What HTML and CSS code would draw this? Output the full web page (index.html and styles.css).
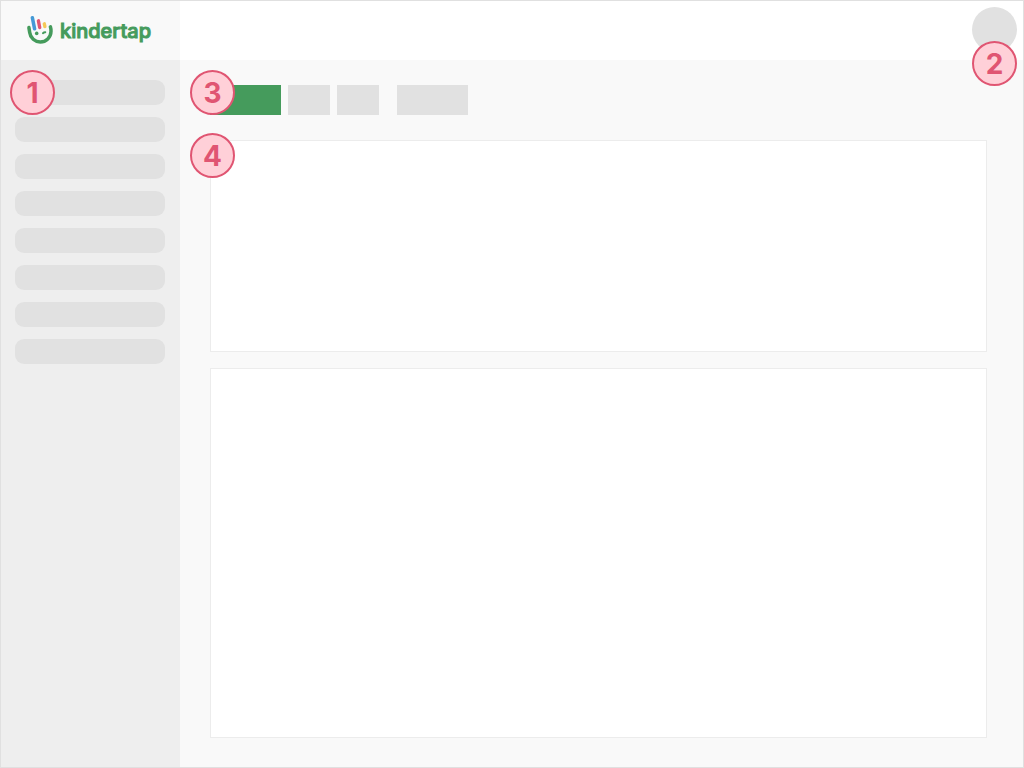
FILE: index.html
```html
<!DOCTYPE html>
<html lang="en">
<head>
    <meta charset="UTF-8">
    <meta name="viewport" content="width=device-width, initial-scale=1.0">
    <title>Kindertap</title>
    <link rel="stylesheet" href="styles.css">
</head>
<body>
    <div class="app">
        <a class="logo" href="#">
            <svg class="logo-icon" viewBox="0 0 28 29" fill="none" stroke-linecap="round">
                <path d="M2.900 11.600L3.700 16.500A10.800 10.800 0 0 0 14.300 26A10.800 10.800 0 0 0 25 15.500Q25.100 13 24.400 10.800" stroke="#459b5c" stroke-width="3.500"/>
                <path d="M6.400 1.800L8.600 12.800" stroke="#4599d6" stroke-width="3.500"/>
                <path d="M12.400 4.800L13.700 11.500" stroke="#e05572" stroke-width="3.400"/>
                <path d="M18.300 7.800L18.900 10.600" stroke="#f5c857" stroke-width="3.400"/>
                <circle cx="10.700" cy="17.400" r="1.800" fill="#459b5c"/>
                <path d="M16.900 17.200Q18 16.200 19.300 16.300" stroke="#459b5c" stroke-width="1.900"/>
            </svg>
            <span class="logo-text">kindertap</span>
        </a>

        <header class="topbar">
            <div class="account">
                <button class="avatar" type="button" aria-label="Account"></button>
                <span class="badge">2</span>
            </div>
        </header>

        <nav class="sidebar">
            <span class="badge">1</span>
            <a href="#" aria-label="Menu item 1"></a>
            <a href="#" aria-label="Menu item 2"></a>
            <a href="#" aria-label="Menu item 3"></a>
            <a href="#" aria-label="Menu item 4"></a>
            <a href="#" aria-label="Menu item 5"></a>
            <a href="#" aria-label="Menu item 6"></a>
            <a href="#" aria-label="Menu item 7"></a>
            <a href="#" aria-label="Menu item 8"></a>
        </nav>

        <main class="content">
            <div class="toolbar">
                <span class="badge">3</span>
                <div class="button-group">
                    <button class="wide primary" type="button" aria-label="Primary action"></button>
                    <button type="button" aria-label="Previous"></button>
                    <button type="button" aria-label="Next"></button>
                </div>
                <button class="wide" type="button" aria-label="More"></button>
            </div>
            <section class="card">
                <span class="badge">4</span>
            </section>
            <section class="card card-main"></section>
        </main>
    </div>
</body>
</html>
```

FILE: styles.css
```css
* {
    box-sizing: border-box;
}
body {
    margin: 0;
    font-family: Inter, "Liberation Sans", Arial, sans-serif;
    background-color: #f9f9f9;
}
button {
    border: none;
    padding: 0;
    background-color: #e1e1e1;
    cursor: pointer;
}
.app {
    display: grid;
    grid-template-columns: 179px 1fr;
    grid-template-rows: 59px 1fr;
    min-height: 100vh;
    border: 1px solid #e0e0e0;
}
.logo {
    display: flex;
    align-items: center;
    gap: 6px;
    padding-left: 25px;
    background-color: #f9f9f9;
    color: #459b5c;
    text-decoration: none;
}
.logo-icon {
    width: 28px;
    height: 29px;
}
.logo-text {
    font-size: 20px;
    line-height: 26px;
    font-weight: 500;
    -webkit-text-stroke: 1px #459b5c;
}
.topbar {
    display: flex;
    justify-content: flex-end;
    align-items: flex-start;
    padding: 6px;
    background-color: #fff;
}
.account {
    position: relative;
}
.avatar {
    display: block;
    width: 45px;
    height: 45px;
    border-radius: 50%;
}
.sidebar {
    position: relative;
    display: flex;
    flex-direction: column;
    gap: 12px;
    padding: 20px 15px 20px 14px;
    background-color: #eee;
}
.sidebar a {
    height: 25px;
    border-radius: 9px;
    background-color: #e1e1e1;
}
.content {
    display: flex;
    flex-direction: column;
    gap: 16px;
    padding: 25px 36px 29px 30px;
}
.toolbar {
    position: relative;
    display: flex;
    gap: 18px;
    margin-bottom: 9px;
}
.button-group {
    display: flex;
    gap: 7px;
}
.toolbar button {
    width: 42px;
    height: 30px;
}
.toolbar .wide {
    width: 71px;
}
.toolbar .primary {
    background-color: #459b5c;
}
.card {
    position: relative;
    min-height: 212px;
    border: 1px solid #ececec;
    background-color: #fff;
}
.card-main {
    flex: 1;
}

/* numbered markers */
.badge {
    position: absolute;
    z-index: 1;
    width: 45px;
    height: 45px;
    border: 2px solid #e05572;
    border-radius: 50%;
    background-color: #ffd0d8;
    color: #e05572;
    font-size: 28px;
    line-height: 42px;
    font-weight: 700;
    text-align: center;
}
.account .badge {
    top: 34px;
    left: 0;
}
.sidebar .badge {
    top: 10px;
    left: 9px;
}
.toolbar .badge {
    top: -15px;
    left: -20px;
}
.card .badge {
    top: -8px;
    left: -21px;
}
```
